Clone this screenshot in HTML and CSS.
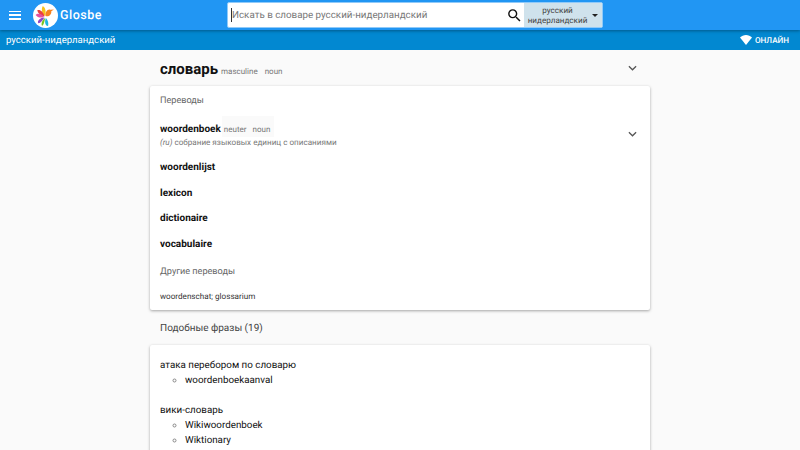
FILE: index.html
```html
<!DOCTYPE html>
<html lang="ru">
<head>
<meta charset="utf-8">
<title>словарь</title>
<link rel="stylesheet" href="styles.css">
</head>
<body>
<header class="topbar">
  <div class="brand">
    <button class="burger" aria-label="menu"><span></span><span></span><span></span></button>
    <svg class="logo" width="25" height="25" viewBox="0 0 26 26">
      <circle cx="13" cy="13" r="13" fill="#fff"/>
      <path d="M12.5 13.5C9 11 8.5 6.5 10 3.500c2.500 0.500 4 5 2.500 10z" fill="#f6c21c"/>
      <path d="M12 14C8 13.500 5 10.500 4.500 7.500c3-1 6.500 2 7.500 6.500z" fill="#e8403f"/>
      <path d="M11.500 14.500C8 16 4.500 15 2.700 12.500c1.800-2 6-2 8.800 2z" fill="#e54fa0"/>
      <path d="M12 15c-2 2.500-3 5.500-6.500 6-1.500-2.500 2-6 6.500-6z" fill="#8e44c9"/>
      <path d="M12.800 15.500c-1 3-1 6-3 8.200-2-0.700-0.500-6.500 3-8.200z" fill="#7cc520"/>
      <path d="M13.500 15.500c2 2.500 3 5 2.200 8.300-3 0.200-4-4.800-2.200-8.300z" fill="#1fb6e0"/>
      <path d="M13 13.500c-0.500-4 2-7.500 5-6.500l3.800-0.300-2.800 1.800c0.500 3.500-2.500 6-6 5z" fill="#f58220"/>
    </svg>
    <span class="brand-name">Glosbe</span>
  </div>
  <form class="search">
    <div class="search-input"><span class="caret"></span><span>Искать в словаре русский-нидерландский</span></div>
    <svg class="search-icon" width="17" height="17" viewBox="0 0 24 24"><path d="M15.500 14h-0.790l-0.280-0.270A6.470 6.470 0 0 0 16 9.500 6.500 6.500 0 1 0 9.500 16c1.610 0 3.090-0.590 4.230-1.570l0.270 0.280v0.790l5 4.990L20.490 19l-4.990-5zm-6 0C7.010 14 5 11.990 5 9.500S7.010 5 9.500 5 14 7.010 14 9.500 11.990 14 9.500 14z" fill="#111"/></svg>
    <div class="lang-select"><span class="lang-text">русский<br>нидерландский</span><span class="lang-arrow"></span></div>
  </form>
</header>
<div class="subbar">
  <span>русский-нидерландский</span>
  <span class="status">
    <svg width="12" height="10" viewBox="0 0 12 10"><path d="M0 2.600C1.600 1 3.700 0 6 0s4.400 1 6 2.600L6 10z" fill="#fff"/></svg>
    <span>ОНЛАЙН</span>
  </span>
</div>
<main class="content">
  <div class="headword">
    <div><h1>словарь</h1><span class="tag">masculine</span><span class="tag">noun</span></div>
    <svg class="chev" width="9" height="6" viewBox="0 0 10 6"><path d="M1 1l4 4 4-4" fill="none" stroke="#555" stroke-width="1.400"/></svg>
  </div>
  <section class="card translations">
    <div class="label">Переводы</div>
    <div class="first">
      <div>
        <div><strong>woordenboek</strong><span class="tags"><span class="tag">neuter</span><span class="tag">noun</span></span></div>
        <div class="def"><i>(ru)</i> собрание языковых единиц с описаниями</div>
      </div>
      <svg class="chev chev-low" width="9" height="6" viewBox="0 0 10 6"><path d="M1 1l4 4 4-4" fill="none" stroke="#555" stroke-width="1.400"/></svg>
    </div>
    <strong class="word">woordenlijst</strong>
    <strong class="word">lexicon</strong>
    <strong class="word">dictionaire</strong>
    <strong class="word">vocabulaire</strong>
    <div class="label other">Другие переводы</div>
    <div class="others">woordenschat; glossarium</div>
  </section>
  <h2 class="phrases-title">Подобные фразы (19)</h2>
  <section class="card phrases">
    <div class="phrase">атака перебором по словарю</div>
    <ul><li>woordenboekaanval</li></ul>
    <div class="phrase">вики-словарь</div>
    <ul><li>Wikiwoordenboek</li><li>Wiktionary</li></ul>
  </section>
</main>
</body>
</html>
```
FILE: styles.css
```css
* { box-sizing: border-box; }
html, body { margin: 0; height: 450px; overflow: hidden; }
body { background: #fafafa; font-family: Roboto, "Liberation Sans", sans-serif; color: #111; text-rendering: geometricPrecision; }
.topbar { height: 30px; background: #2196f3; display: flex; align-items: center; position: relative; z-index: 1; box-shadow: 0 1px 3px rgba(0,0,0,.35); }
.brand { width: 227px; display: flex; align-items: center; }
.burger { width: 12px; height: 9px; margin: 0 12px 0 9px; padding: 0; border: 0; background: none; display: flex; flex-direction: column; justify-content: space-between; }
.burger span { height: 1.500px; background: #fff; display: block; }
.logo { flex: none; }
.brand-name { margin-left: 2px; color: #fff; font-size: 12.500px; font-weight: 500; letter-spacing: .5px; }
.search { width: 376px; height: 26px; display: flex; align-items: center; background: #fff; border: 1px solid #90caf9; border-radius: 2px; }
.search-input { flex: 1; display: flex; align-items: center; font-size: 9.800px; color: #777; padding-left: 3px; white-space: nowrap; }
.caret { width: 1px; height: 14px; background: #333; }
.search-icon { margin-right: 1px; }
.lang-select { width: 78px; height: 24px; background: #cfe2ec; display: flex; align-items: center; justify-content: center; gap: 5px; font-size: 8.125px; color: #444; text-align: center; line-height: 10px; }
.lang-arrow { width: 0; height: 0; border: 3px solid transparent; border-top: 3px solid #222; border-bottom: 0; }
.subbar { height: 20px; background: #0288d1; color: #fff; display: flex; align-items: center; justify-content: space-between; padding: 0 11px 0 6px; font-size: 9.600px; }
.status { display: flex; align-items: center; gap: 4px; font-size: 8.125px; font-weight: 500; }
.status svg { margin-right: -1px; }
.content { width: 500px; margin: 0 auto; }
.headword { height: 36px; padding: 0 13px 0 10px; display: flex; align-items: center; justify-content: space-between; }
h1 { display: inline; margin: 0 3px 0 0; font-size: 15px; font-weight: 700; }
.tag { font-size: 8px; color: #777; margin-right: 7px; }
.card { background: #fff; border-radius: 2px; box-shadow: 0 1px 3px rgba(0,0,0,.35); }
.translations { height: 224px; padding: 0 10px; display: flex; flex-direction: column; }
.label { font-size: 9.100px; color: #666; margin-top: 10px; line-height: 11px; }
.first { display: flex; justify-content: space-between; align-items: center; margin-top: 10px; padding-right: 3px; }
.chev-low { margin-top: 4px; }
.first strong, .word { font-size: 10px; font-weight: 700; }
.tags { background: #fafafa; margin-left: 1px; padding: 1px 0 1px 2px; }
.tags .tag { margin-right: 4px; }
.tags .tag + .tag { margin-left: 2px; }
.def { font-size: 8.125px; color: #777; margin-top: 1px; }
.word { display: block; line-height: 14px; margin-top: 11.600px; }
.first + .word { margin-top: 14px; }
.other { margin-top: 15px; }
.others { font-size: 8.125px; margin-top: 13px; color: #333; }
.phrases-title { margin: 0; padding: 2px 10px 0; height: 35px; display: flex; align-items: center; font-size: 10px; font-weight: 400; color: #444; }
.phrases { padding: 13px 10px; height: 140px; font-size: 9.800px; line-height: 15px; }
.phrases ul { margin: 0 0 15px; padding-left: 25px; list-style: circle; }
.phrases li::marker { color: #888; }
```
